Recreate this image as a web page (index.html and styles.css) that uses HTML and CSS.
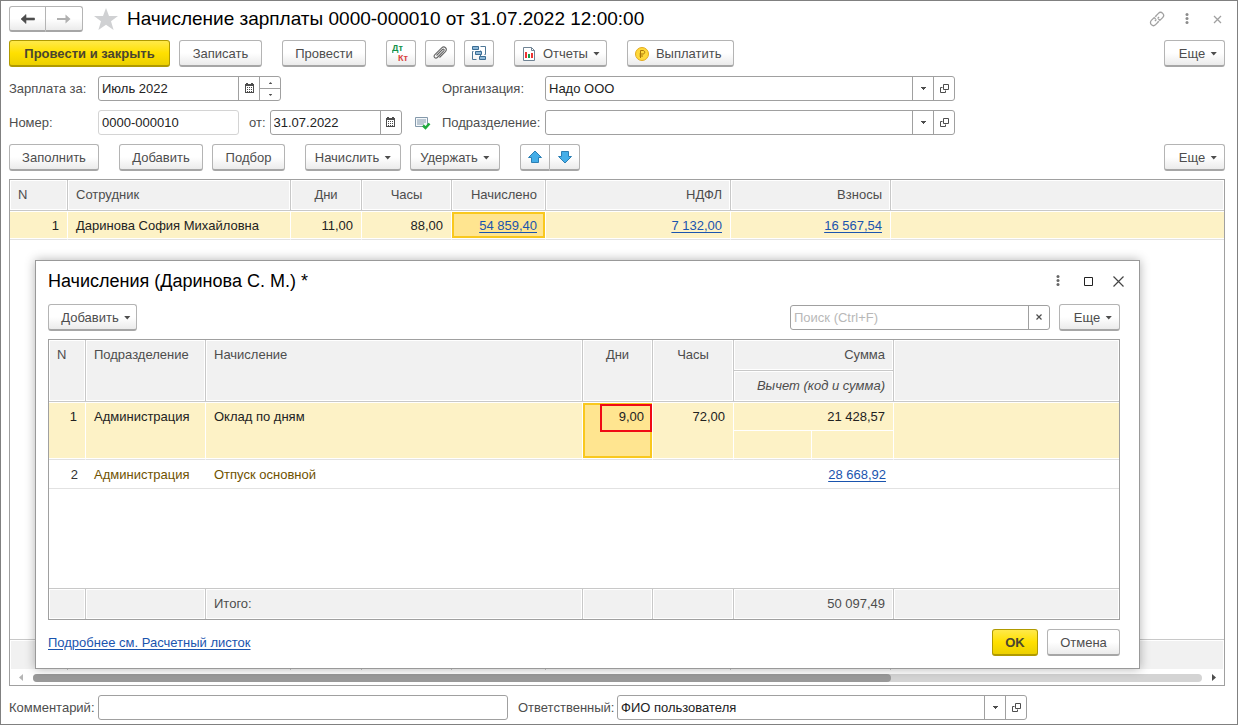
FILE: index.html
```html
<!DOCTYPE html>
<html lang="ru">
<head>
<meta charset="utf-8">
<title>Начисление зарплаты</title>
<link rel="stylesheet" href="styles.css">
</head>
<body>
<svg class="sprite" aria-hidden="true">
  <symbol id="i-cal" viewBox="0 0 9 10"><path d="M1 0h2v1h3V0h2v1h1v9H0V1h1z" fill="#4d4d4d"/><path d="M1 3h7v6H1z" fill="#fff"/><path d="M2 4h1v1H2zM4 4h1v1H4zM6 4h1v1H6zM2 6h1v1H2zM4 6h1v1H4zM6 6h1v1H6zM2 8h1v1H2zM4 8h1v1H4zM6 8h1v1H6z" fill="#4d4d4d"/></symbol>
  <symbol id="i-open" viewBox="0 0 9 9"><path d="M3.500.500h5v5h-5zM2.500 3.500h-2v5h5v-2" fill="none" stroke="#4d4d4d"/></symbol>
  <symbol id="i-down" viewBox="0 0 5 3"><path d="M0 0h5v1h-1v1h-1v1h-1v-1h-1v-1h-1z" fill="#4d4d4d"/></symbol>
</svg>
<main class="window">
  <header class="titlebar">
    <div class="pair">
      <button class="btn nav" aria-label="Назад"><svg width="16" height="12" viewBox="0 0 16 12"><path d="M1 6l5-4.500v3.500h8.500v2h-8.500v3.500z" fill="#4d4d4d" stroke="#4d4d4d" stroke-width=".6"/></svg></button>
      <button class="btn nav" aria-label="Вперед"><svg width="16" height="12" viewBox="0 0 16 12"><path d="M14.500 6l-5-4.500v3.500h-8.500v2h8.500v3.500z" fill="#b0b0b0"/></svg></button>
    </div>
    <svg class="star" width="24" height="22" viewBox="0 0 24 22"><path d="M12 0l3 8h9l-7 5.300 2.600 8.700-7.600-5.200-7.600 5.200 2.600-8.700-7-5.300h9z" fill="#d0d1d3"/></svg>
    <h1>Начисление зарплаты 0000-000010 от 31.07.2022 12:00:00</h1>
    <div class="wintools">
      <button class="bare" aria-label="Ссылка"><svg width="16" height="16" viewBox="0 0 16 16" fill="none" stroke="#a0a0a0" stroke-width="1.300"><g transform="rotate(-45 8 8)"><path d="M7 7v-2h-4a3 3 0 0 0 0 6h4v-1M9 9v2h4a3 3 0 0 0 0-6h-4v1M5 8h2.200M8.800 8h2.200"/></g></svg></button>
      <button class="bare" aria-label="Меню"><svg width="4" height="12" viewBox="0 0 4 12" fill="#8c8c8c"><circle cx="2" cy="1.500" r="1.500"/><circle cx="2" cy="5.500" r="1.500"/><circle cx="2" cy="9.500" r="1.500"/></svg></button>
      <button class="bare" aria-label="Закрыть"><svg width="9" height="9" viewBox="0 0 9 9" stroke="#a0a0a0" stroke-width="1.300"><path d="M1 1l7 7M8 1l-7 7"/></svg></button>
    </div>
  </header>

  <div class="toolbar">
    <button class="btn primary w-161">Провести и закрыть</button>
    <button class="btn w-83">Записать</button>
    <button class="btn lead">Провести</button>
    <button class="btn icon lead" aria-label="Дт Кт"><svg width="18" height="18" viewBox="0 0 18 18"><text class="dt" x="0" y="7">Дт</text><text class="kt" x="6" y="17">Кт</text></svg></button>
    <button class="btn icon" aria-label="Файлы"><svg width="16" height="16" viewBox="0 0 16 16" fill="none" stroke="#666" stroke-width="1.100"><path d="M4.500 10.500l6-6c1-1 2.300.3 1.300 1.400l-6.500 6.600c-1.800 1.700-4.300-.7-2.600-2.600l7-7c2.700-2.500 6.200.9 3.700 3.700l-5.900 5.900"/></svg></button>
    <button class="btn icon" aria-label="Структура"><svg width="16" height="16" viewBox="0 0 16 16"><g fill="none" stroke="#4e7796"><path d="M9.500 1.500h5v8h-1M5.500 14.500h-4v-8h1M9.500 5.500v1M9.500 9.500v2"/></g><g fill="#8db7d6" stroke="#3b6d94"><path d="M1.500 1.500h6v3h-6zM4.500 6.500h6v3h-6zM8.500 11.500h6v3h-6z"/></g></svg></button>
    <button class="btn lead tight w-92"><svg width="14" height="14" viewBox="0 0 14 14"><path d="M1.500.500h8l3 3v10h-11z" fill="#fff" stroke="#6f8394"/><path d="M9.500.500v3h3" fill="none" stroke="#6f8394"/><path d="M3 5h2v6h-2z" fill="#e33"/><path d="M6 7h2v4h-2z" fill="#18a04a"/><path d="M9 6h2v5h-2z" fill="#e33"/></svg><span class="gap-l">Отчеты</span><i class="caret"></i></button>
    <button class="btn lead tight w-107"><svg width="14" height="14" viewBox="0 0 14 14"><circle cx="7" cy="7" r="6.500" fill="#ffd93b" stroke="#e2a91c"/><path d="M5.500 11v-7.500h2.500c2.300 0 2.300 3.500 0 3.500h-3.500M4.500 9h3.500" fill="none" stroke="#a87508"/></svg><span class="gap-l">Выплатить</span></button>
    <button class="btn more w-61">Еще<i class="caret"></i></button>
  </div>

  <div class="fields">
    <label class="lbl" for="period">Зарплата за:</label>
    <div class="cell-left">
      <div class="box w-183"><input id="period" value="Июль 2022"><button aria-label="Календарь"><svg width="9" height="10"><use href="#i-cal"/></svg></button><span class="spin"><button aria-label="Больше"><svg class="flip" width="3" height="2"><use href="#i-down"/></svg></button><button aria-label="Меньше"><svg width="3" height="2"><use href="#i-down"/></svg></button></span></div>
    </div>
    <label class="lbl" for="org">Организация:</label>
    <div class="box"><input id="org" value="Надо ООО"><button aria-label="Выбрать"><svg width="5" height="3"><use href="#i-down"/></svg></button><button aria-label="Открыть"><svg width="9" height="9"><use href="#i-open"/></svg></button></div>

    <label class="lbl" for="num">Номер:</label>
    <div class="cell-left">
      <div class="box soft w-141"><input id="num" value="0000-000010"></div>
      <label class="from" for="date">от:</label>
      <div class="box w-132"><input id="date" value="31.07.2022"><button aria-label="Календарь"><svg width="9" height="10"><use href="#i-cal"/></svg></button></div>
      <svg class="status" width="16" height="14" viewBox="0 0 16 14"><path d="M.500 1.500h12v9h-12z" fill="#f4f8fb" stroke="#8499ab"/><path d="M2 4h9M2 6h9M2 8h7" stroke="#8499ab"/><path d="M8 9.500l2.500 2.500 4-4.500" fill="none" stroke="#1faa3c" stroke-width="2.500"/></svg>
    </div>
    <label class="lbl" for="dep">Подразделение:</label>
    <div class="box"><input id="dep" value=""><button aria-label="Выбрать"><svg width="5" height="3"><use href="#i-down"/></svg></button><button aria-label="Открыть"><svg width="9" height="9"><use href="#i-open"/></svg></button></div>
  </div>

  <div class="toolbar">
    <button class="btn w-90">Заполнить</button>
    <button class="btn lead">Добавить</button>
    <button class="btn w-73">Подбор</button>
    <button class="btn lead w-96">Начислить<i class="caret"></i></button>
    <button class="btn w-90">Удержать<i class="caret"></i></button>
    <div class="pair lead">
      <button class="btn icon" aria-label="Вверх"><svg width="16" height="14" viewBox="0 0 16 14"><path d="M8 1l6.500 6.500h-3v5h-7v-5h-3z" fill="#45aee8" stroke="#2b7fb4"/></svg></button>
      <button class="btn icon" aria-label="Вниз"><svg class="flip" width="16" height="14" viewBox="0 0 16 14"><path d="M8 1l6.500 6.500h-3v5h-7v-5h-3z" fill="#45aee8" stroke="#2b7fb4"/></svg></button>
    </div>
    <button class="btn more w-61">Еще<i class="caret"></i></button>
  </div>

  <section class="frame">
    <table class="grid">
      <colgroup><col class="c-58"><col class="c-223"><col class="c-71"><col class="c-90"><col class="c-94"><col class="c-185"><col class="c-160"><col></colgroup>
      <thead><tr class="h-31"><th>N</th><th>Сотрудник</th><th class="mid">Дни</th><th class="mid">Часы</th><th class="num">Начислено</th><th class="num">НДФЛ</th><th class="num">Взносы</th><th></th></tr></thead>
      <tbody>
        <tr class="sel h-29"><td class="num">1</td><td>Даринова София Михайловна</td><td class="num">11,00</td><td class="num">88,00</td><td class="num cur"><a href="#">54 859,40</a></td><td class="num"><a href="#">7 132,00</a></td><td class="num"><a href="#">16 567,54</a></td><td></td></tr>
        <tr class="fill"><td colspan="8"></td></tr>
      </tbody>
      <tfoot><tr class="h-31"><td></td><td></td><td></td><td></td><td></td><td></td><td></td><td></td></tr></tfoot>
    </table>
    <div class="scroll"><svg width="4" height="7"><path d="M4 0v7l-4-3.500z" fill="#b5b5b5"/></svg><div class="track"><div class="thumb"></div></div><svg width="4" height="7"><path d="M0 0v7l4-3.500z" fill="#4d4d4d"/></svg></div>
  </section>

  <footer class="bottom">
    <label class="lbl" for="comment">Комментарий:</label>
    <div class="box"><input id="comment" value=""></div>
    <label class="lbl resp" for="resp">Ответственный:</label>
    <div class="box"><input id="resp" value="ФИО пользователя"><button aria-label="Выбрать"><svg width="5" height="3"><use href="#i-down"/></svg></button><button aria-label="Открыть"><svg width="9" height="9"><use href="#i-open"/></svg></button></div>
  </footer>

  <section class="dialog" role="dialog" aria-labelledby="dlg-title">
    <header class="dlg-title">
      <h2 id="dlg-title">Начисления (Даринова С. М.) *</h2>
      <div class="wintools">
        <button class="bare" aria-label="Меню"><svg width="4" height="12" viewBox="0 0 4 12" fill="#666"><circle cx="2" cy="1.500" r="1.500"/><circle cx="2" cy="5.500" r="1.500"/><circle cx="2" cy="9.500" r="1.500"/></svg></button>
        <button class="bare" aria-label="Развернуть"><svg width="9" height="9"><path d="M.500.500h8v8h-8z" fill="none" stroke="#222"/></svg></button>
        <button class="bare" aria-label="Закрыть"><svg width="11" height="11" stroke="#444" stroke-width="1.200"><path d="M.500.500l10 10M10.500.500l-10 10"/></svg></button>
      </div>
    </header>
    <div class="toolbar">
      <button class="btn w-89">Добавить<i class="caret"></i></button>
      <div class="box search"><input type="text" aria-label="Поиск" placeholder="Поиск (Ctrl+F)"><button aria-label="Очистить"><svg width="6" height="6" stroke="#4d4d4d" stroke-width="1.200"><path d="M.500.500l5 5M5.500.500l-5 5"/></svg></button></div>
      <button class="btn w-61">Еще<i class="caret"></i></button>
    </div>
    <div class="frame">
      <table class="grid">
        <colgroup><col class="c-37"><col class="c-120"><col class="c-377"><col class="c-70"><col class="c-81"><col class="c-78"><col class="c-82"><col></colgroup>
        <thead>
          <tr class="h-31"><th rowspan="2">N</th><th rowspan="2">Подразделение</th><th rowspan="2">Начисление</th><th rowspan="2" class="mid">Дни</th><th rowspan="2" class="mid">Часы</th><th colspan="2" class="num">Сумма</th><th rowspan="2"></th></tr>
          <tr class="h-31"><th colspan="2" class="num it">Вычет (код и сумма)</th></tr>
        </thead>
        <tbody>
          <tr class="sel h-29"><td rowspan="2" class="num">1</td><td rowspan="2">Администрация</td><td rowspan="2">Оклад по дням</td><td rowspan="2" class="num cur marked"><div class="mark">9,00</div></td><td rowspan="2" class="num">72,00</td><td colspan="2" class="num part">21 428,57</td><td rowspan="2"></td></tr>
          <tr class="sel sub h-29"><td></td><td></td></tr>
          <tr class="plain h-29"><td class="num dark">2</td><td>Администрация</td><td>Отпуск основной</td><td></td><td></td><td colspan="2" class="num"><a href="#">28 668,92</a></td><td></td></tr>
          <tr class="fill"><td colspan="8"></td></tr>
        </tbody>
        <tfoot><tr class="h-31"><td></td><td></td><td>Итого:</td><td></td><td></td><td colspan="2" class="num">50 097,49</td><td></td></tr></tfoot>
      </table>
    </div>
    <footer class="dlg-foot">
      <a href="#">Подробнее см. Расчетный листок</a>
      <button class="btn primary w-46">OK</button>
      <button class="btn w-73">Отмена</button>
    </footer>
  </section>
</main>
</body>
</html>
```

FILE: styles.css
```css
* { box-sizing: border-box; }
body { margin: 0; background: #fff; color: #4d4d4d; font: 13px/16px "Liberation Sans", Arial, sans-serif; }
button, input { font: inherit; color: inherit; margin: 0; }
.sprite { position: absolute; width: 0; height: 0; }
svg { display: block; flex: none; }
.flip { transform: rotate(180deg); }
a { color: #1a54ae; text-decoration: underline; text-underline-offset: 2px; }

.window { position: relative; display: flex; flex-direction: column; min-height: 100vh; padding: 5px 12px 4px 8px; border: 1px solid #808080; gap: 8px; }
.titlebar { display: flex; align-items: center; height: 26px; }
h1, h2 { margin: 0; line-height: 24px; font-weight: 400; color: #000; white-space: nowrap; }
h1 { font-size: 19px; }
h2 { font-size: 18px; }
.star { margin: 0 9px 0 11px; }
.wintools { display: flex; align-items: center; margin: 0 -7px 0 auto; }
.bare { display: flex; justify-content: center; width: 30px; padding: 0; border: 0; background: none; }

.btn { display: inline-flex; align-items: center; justify-content: center; min-width: 84px; height: 27px; padding: 1px 8px 0; border: 1px solid #b4b4b4; border-bottom: 2px solid #a6a6a6; border-radius: 3px; background: linear-gradient(#fff 50%, #ebebeb); color: #4d4d4d; white-space: nowrap; }
.primary { border-color: #b09a00; background: linear-gradient(#ffe94a, #ffe000 50%, #ecd000); color: #4a4530; font-weight: 700; }
.btn.icon { min-width: 30px; width: 30px; padding: 0; }
.btn.tight { justify-content: flex-start; padding: 1px 6px 0 7px; }
.pair { display: flex; }
.pair .btn:first-child { border-radius: 3px 0 0 3px; }
.pair .btn:last-child { border-radius: 0 3px 3px 0; border-left: 0; }
.btn.nav { min-width: 37px; width: 37px; height: 26px; padding: 0; }
.caret { width: 7px; height: 4px; margin-left: 5px; background: #4d4d4d; clip-path: polygon(0 0, 100% 0, 50% 100%); }
.gap-l { margin-left: 7px; }
.toolbar { display: flex; align-items: center; gap: 9px; }
.toolbar .lead { margin-left: 11px; }
.toolbar .more { margin-left: auto; }
.btn.w-46 { min-width: 46px; }
.btn.w-61 { min-width: 61px; padding: 1px 6px 0 13px; }
.btn.w-73 { min-width: 73px; }
.btn.w-83 { min-width: 83px; }
.btn.w-89 { min-width: 89px; padding: 1px 5px 0 12px; }
.btn.w-90 { min-width: 90px; }
.btn.w-92 { min-width: 92px; }
.btn.w-96 { min-width: 96px; }
.btn.w-107 { min-width: 107px; }
.btn.w-161 { min-width: 161px; }
.dt, .kt { font-size: 9px; font-weight: 700; }
.dt { fill: #12924a; }
.kt { fill: #d9433f; }

.fields { display: grid; grid-template-columns: 89px 344px 103px 410px; row-gap: 9px; align-items: center; margin: 1px 0; }
.cell-left { display: flex; align-items: center; }
.lbl { white-space: nowrap; }
.from { margin: 0 4px 0 10px; }
.status { margin-left: 13px; }
.box { display: flex; height: 25px; border: 1px solid #a0a0a0; border-radius: 3px; background: #fff; }
.box.soft { border-color: #d4d4d4; }
.box input { flex: 1; min-width: 0; width: 0; padding: 0 3px; border: 0; outline: 0; background: none; color: #222; }
.box input::placeholder { color: #b8b8b8; opacity: 1; }
.box > button { display: flex; align-items: center; justify-content: center; width: 21px; padding: 0 0 1px; border: 0; border-left: 1px solid #a0a0a0; background: none; }
.spin { display: flex; flex-direction: column; width: 21px; border-left: 1px solid #a0a0a0; }
.spin button { flex: 1; display: flex; align-items: center; justify-content: center; padding: 0; border: 0; background: none; }
.spin button + button { border-top: 1px solid #a0a0a0; }
.w-183 { width: 183px; }
.w-141 { width: 141px; }
.w-132 { width: 132px; }

.frame { display: flex; flex-direction: column; flex: 1; min-height: 0; border: 1px solid #a0a0a0; background: #fff; }
.grid { flex: 1; width: 100%; table-layout: fixed; border-collapse: separate; border-spacing: 0; }
.grid th, .grid td { padding: 7px 8px 5px; text-align: left; font-weight: 400; vertical-align: top; white-space: nowrap; }
.grid .num { text-align: right; }
.grid .mid { text-align: center; }
.grid .it { font-style: italic; }
.grid th { background: #f1f1f1; border: 0 solid #c8c8c8; border-width: 0 1px 1px 0; box-shadow: inset 0 0 0 1px #fff; }
.grid tfoot td { background: #f1f1f1; border: 0 solid #c8c8c8; border-width: 1px 1px 0 0; box-shadow: inset 0 0 0 1px #fff; }
.grid tr > :last-child { border-right: 0; }
.grid thead tr + tr > :last-child { border-right: 1px solid #c8c8c8; }
.h-31 { height: 31px; }
.h-29 { height: 29px; }
.sel td { background: #fdf2c6; color: #222; border-right: 1px solid #fff; border-bottom: 1px solid #e2e2e2; box-shadow: inset 0 1px #fff, inset 0 -1px #fff; }
.sel td.part { border-bottom-color: #fff; box-shadow: inset 0 1px #fff; }
.sub td { box-shadow: inset 0 -1px #fff; }
.grid .sub td { border-right: 1px solid #fff; }
.sel td.cur { background: #ffe590; box-shadow: inset 0 1px #fff, inset 0 -1px #fff, inset 2px 0 #f9c81e, inset -2px 0 #f9c81e, inset 0 3px #f9c81e, inset 0 -3px #f9c81e; }
.grid .marked { padding: 2px 0 0 17px; }
.mark { height: 28px; padding: 3px 6px; border: 2px solid #f00a14; }
.plain td { border-bottom: 1px solid #e2e2e2; color: #6f5200; }
.plain .dark { color: #333; }
.c-37 { width: 37px; }
.c-58 { width: 58px; }
.c-70 { width: 70px; }
.c-71 { width: 71px; }
.c-78 { width: 78px; }
.c-81 { width: 81px; }
.c-82 { width: 82px; }
.c-90 { width: 90px; }
.c-94 { width: 94px; }
.c-120 { width: 120px; }
.c-160 { width: 160px; }
.c-185 { width: 185px; }
.c-223 { width: 223px; }
.c-377 { width: 377px; }
.scroll { display: flex; align-items: center; height: 15px; padding: 0 8px 0 9px; gap: 10px; }
.track { flex: 1; height: 8px; border-radius: 4px; background: #d4d4d4; }
.thumb { width: 73.4%; height: 8px; border-radius: 4px; background: #999; }

.bottom { display: grid; grid-template-columns: 89px 410px 109px 410px; align-items: center; margin-top: 1px; }
.resp { padding-left: 10px; }

.dialog { position: absolute; left: 34px; top: 259px; width: calc(100% - 131px); bottom: 55px; display: flex; flex-direction: column; padding: 7px 19px 12px 12px; gap: 8px; border: 1px solid #999; background: #fff; box-shadow: 0 0 10px rgba(0, 0, 0, .3); }
.dlg-title { display: flex; align-items: center; height: 26px; margin-bottom: 2px; }
.dlg-title .wintools { margin-right: -13px; }
.search { width: 260px; margin-left: auto; }
.dlg-foot { display: flex; align-items: center; gap: 9px; margin-top: 1px; }
.dlg-foot a { margin-right: auto; }
```
